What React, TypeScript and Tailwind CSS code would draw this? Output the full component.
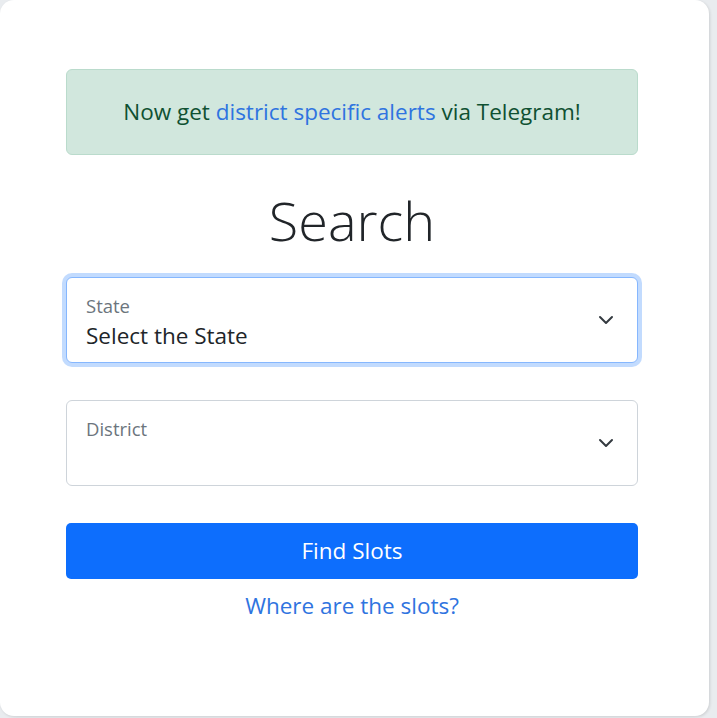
import { useState } from "react";

function Chevron() {
  return (
    <svg width="16" height="16" viewBox="0 0 16 16" fill="none" aria-hidden="true">
      <path d="M2 5l6 6 6-6" stroke="#343a40" strokeWidth="2" strokeLinecap="round" strokeLinejoin="round" />
    </svg>
  );
}

function FloatingSelect({
  label,
  value,
  focused,
}: {
  label: string;
  value?: string;
  focused?: boolean;
}) {
  return (
    <div
      className={`flex h-[86px] items-center justify-between rounded-[6px] border bg-white pl-[19px] pr-[23px] ${
        focused
          ? "border-[#86b7fe] shadow-[0_0_0_4px_rgba(13,110,253,0.25)]"
          : "border-[#ced4da]"
      }`}
    >
      <div className="flex h-full flex-col pt-[15px]">
        <span className="text-[18.5px] leading-[26px] text-[#6c757d]">{label}</span>
        <span className="mt-[2px] text-[22.5px] leading-[30px] text-[#212529]">{value ?? ""}</span>
      </div>
      <Chevron />
    </div>
  );
}

export default function App() {
  const [state] = useState("Select the State");

  return (
    <div className="h-[718px] w-[717px] overflow-hidden bg-[#e9ecef] font-['Open_Sans',sans-serif]">
      <div className="h-[716px] w-[709px] rounded-[14px] bg-white pt-[69px] shadow-[1px_1px_3px_rgba(0,0,0,0.12)]">
        <div className="ml-[66px] w-[572px]">
          <div className="flex h-[86px] items-center justify-center rounded-[6px] border border-[#badbcc] bg-[#d1e7dd] text-[22.5px] text-[#0f5132]">
            <span>
              Now get <a className="text-[#2f74e0]">district specific alerts</a> via Telegram!
            </span>
          </div>

          <h1 className="mt-[20px] text-center text-[54px] font-light leading-[90px] text-[#212529]">
            Search
          </h1>

          <div className="mt-[12px] flex flex-col gap-[37px]">
            <FloatingSelect label="State" value={state} focused />
            <FloatingSelect label="District" />
          </div>

          <button
            type="button"
            className="mt-[37px] flex h-[56px] w-full items-center justify-center rounded-[5px] bg-[#0d6efd] text-[22.5px] text-white"
          >
            Find Slots
          </button>

          <p className="mt-[11px] text-center text-[22.5px] leading-[32px] text-[#2f74e0]">
            <a>Where are the slots?</a>
          </p>
        </div>
      </div>
    </div>
  );
}
